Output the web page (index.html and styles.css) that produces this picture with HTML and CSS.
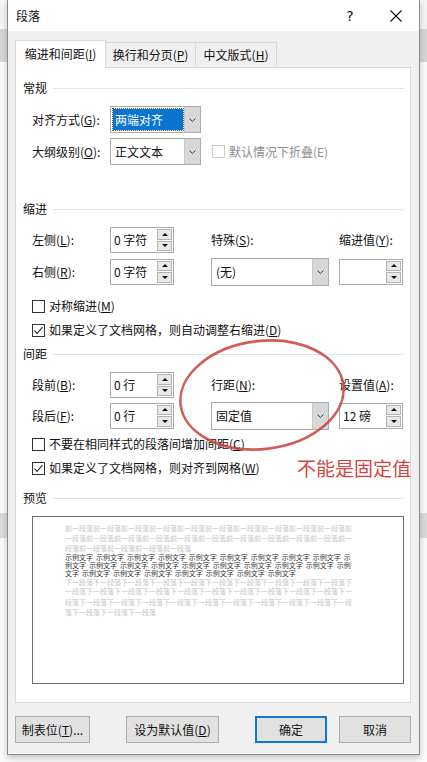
FILE: index.html
```html
<!DOCTYPE html>
<html lang="zh-CN">

<head>
    <meta charset="UTF-8">
    <title>段落</title>
    <link rel="stylesheet" href="styles.css">
</head>

<body>
    <div class="dialog">
        <div class="titlebar">
            <span class="title">段落</span>
            <span class="help">?</span>
            <span class="close">
                <svg width="12" height="12" viewBox="0 0 12 12"><path d="M0.5 0.5 L11.5 11.5 M11.5 0.5 L0.5 11.5" stroke="#111" stroke-width="1.1" fill="none"/></svg>
            </span>
        </div>

        <div class="dialog-body">
            <div class="tabs">
                <div class="tab active">缩进和间距(<u>I</u>)</div>
                <div class="tab tab-2">换行和分页(<u>P</u>)</div>
                <div class="tab tab-3">中文版式(<u>H</u>)</div>
            </div>

            <div class="panel">
                <div class="group-title"><span>常规</span></div>
                <div class="form-grid general">
                    <span>对齐方式(<u>G</u>):</span>
                    <div class="select narrow">
                        <span class="select-val"><span class="hl">两端对齐</span></span>
                        <span class="select-btn"><svg width="7" height="4" viewBox="0 0 7 4"><polyline points="0.5,0.5 3.5,3.5 6.5,0.5" fill="none" stroke="#444" stroke-width="1"/></svg></span>
                    </div>
                    <span></span>
                    <span>大纲级别(<u>O</u>):</span>
                    <div class="select narrow">
                        <span class="select-val">正文文本</span>
                        <span class="select-btn"><svg width="7" height="4" viewBox="0 0 7 4"><polyline points="0.5,0.5 3.5,3.5 6.5,0.5" fill="none" stroke="#444" stroke-width="1"/></svg></span>
                    </div>
                    <div class="cb-inline disabled"><span class="cb"></span><span>默认情况下折叠(E)</span></div>
                </div>

                <div class="group-title gap-indent"><span>缩进</span></div>
                <div class="form-grid measures">
                    <span>左侧(<u>L</u>):</span>
                    <div class="spin"><span>0 字符</span><div class="spin-btns"><span class="up"></span><span class="down"></span></div></div>
                    <span>特殊(<u>S</u>):</span>
                    <span>缩进值(<u>Y</u>):</span>

                    <span>右侧(<u>R</u>):</span>
                    <div class="spin"><span>0 字符</span><div class="spin-btns"><span class="up"></span><span class="down"></span></div></div>
                    <div class="select wide">
                        <span class="select-val">(无)</span>
                        <span class="select-btn"><svg width="7" height="4" viewBox="0 0 7 4"><polyline points="0.5,0.5 3.5,3.5 6.5,0.5" fill="none" stroke="#444" stroke-width="1"/></svg></span>
                    </div>
                    <div class="spin"><span></span><div class="spin-btns"><span class="up"></span><span class="down"></span></div></div>
                </div>

                <div class="cb-row first"><span class="cb"></span><span>对称缩进(<u>M</u>)</span></div>
                <div class="cb-row"><span class="cb checked"><svg width="11" height="11" viewBox="0 0 11 11"><polyline points="1.5,5.5 4,8.5 9.5,2" fill="none" stroke="#111" stroke-width="1.1"/></svg></span><span>如果定义了文档网格，则自动调整右缩进(<u>D</u>)</span></div>

                <div class="group-title gap-small"><span>间距</span></div>
                <div class="form-grid measures spacing">
                    <span>段前(<u>B</u>):</span>
                    <div class="spin"><span>0 行</span><div class="spin-btns"><span class="up"></span><span class="down"></span></div></div>
                    <span>行距(<u>N</u>):</span>
                    <span>设置值(<u>A</u>):</span>

                    <span>段后(<u>F</u>):</span>
                    <div class="spin"><span>0 行</span><div class="spin-btns"><span class="up"></span><span class="down"></span></div></div>
                    <div class="select wide">
                        <span class="select-val">固定值</span>
                        <span class="select-btn"><svg width="7" height="4" viewBox="0 0 7 4"><polyline points="0.5,0.5 3.5,3.5 6.5,0.5" fill="none" stroke="#444" stroke-width="1"/></svg></span>
                    </div>
                    <div class="spin"><span>12 磅</span><div class="spin-btns"><span class="up"></span><span class="down"></span></div></div>
                </div>

                <div class="cb-row after-spacing"><span class="cb"></span><span>不要在相同样式的段落间增加间距(<u>C</u>)</span></div>
                <div class="cb-row"><span class="cb checked"><svg width="11" height="11" viewBox="0 0 11 11"><polyline points="1.5,5.5 4,8.5 9.5,2" fill="none" stroke="#111" stroke-width="1.1"/></svg></span><span>如果定义了文档网格，则对齐到网格(<u>W</u>)</span></div>

                <div class="group-title gap-preview"><span>预览</span></div>
                <div class="preview">
                    <div class="preview-text">
                        <p class="pv-other">前一段落前一段落前一段落前一段落前一段落前一段落前一段落前一段落前一段落前一段落前一段落前一段落前一段落前一段落前一段落前一段落前一段落前一段落前一段落前一段落前一段落前一段落前一段落前一段落前一段落</p>
                        <p class="pv-sample">示例文字 示例文字 示例文字 示例文字 示例文字 示例文字 示例文字 示例文字 示例文字 示例文字 示例文字 示例文字 示例文字 示例文字 示例文字 示例文字 示例文字 示例文字 示例文字 示例文字 示例文字 示例文字 示例文字 示例文字 示例文字 示例文字</p>
                        <p class="pv-other">下一段落下一段落下一段落下一段落下一段落下一段落下一段落下一段落下一段落下一段落下一段落下一段落下一段落下一段落下一段落下一段落下一段落下一段落下一段落下一段落下一段落下一段落下一段落下一段落下一段落下一段落下一段落下一段落下一段落下一段落下一段落下一段落下一段落下一段落</p>
                    </div>
                </div>
            </div>

            <div class="buttons">
                <button class="btn btn-tabs">制表位(<u>T</u>)...</button>
                <button class="btn btn-default">设为默认值(<u>D</u>)</button>
                <button class="btn btn-ok">确定</button>
                <button class="btn btn-cancel">取消</button>
            </div>
        </div>

        <!-- red annotation drawn over the dialog -->
        <svg class="mark" width="411" height="754" viewBox="0 0 411 754">
            <ellipse cx="254" cy="395" rx="82" ry="54" transform="rotate(-7 254 395)" fill="none" stroke="#c8413b" stroke-opacity="0.85" stroke-width="2.6"/>
        </svg>
        <span class="note">不能是固定值</span>
    </div>
</body>

</html>
```

FILE: styles.css
```css
* {
    box-sizing: border-box;
    margin: 0;
    padding: 0;
}

body {
    width: 427px;
    height: 762px;
    overflow: hidden;
    font-family: "Noto Sans CJK SC", "Noto Sans", sans-serif;
    font-size: 12px;
    line-height: 16px;
    color: #111;
    background: linear-gradient(to bottom,
        #f4f4f4 0, #f4f4f4 29px,
        #d6d6d6 29px, #d6d6d6 62px,
        #fafafa 62px, #fafafa 513px,
        #dadada 513px, #dadada 538px,
        #fafafa 538px);
}

u {
    text-decoration: underline;
    text-underline-offset: 1px;
}

.dialog {
    position: relative;
    margin-left: 7px;
    width: 413px;
    height: 755px;
    background: #f0f0f0;
    border: 1px solid #8c8c8c;
    border-top: none;
    box-shadow: 0 3px 6px rgba(0, 0, 0, 0.22);
    display: flex;
    flex-direction: column;
}

.titlebar {
    height: 31px;
    background: #fff;
    display: flex;
    align-items: center;
    padding-left: 8px;
}

.title {
    flex: 1;
}

.help,
.close {
    width: 46px;
    height: 31px;
    display: flex;
    align-items: center;
    justify-content: center;
}

.help {
    font-size: 14px;
    font-family: "DejaVu Sans", sans-serif;
}

.dialog-body {
    flex: 1;
    padding: 0 8px 0 7px;
    display: flex;
    flex-direction: column;
}

.tabs {
    height: 36px;
    display: flex;
    align-items: flex-end;
}

.tab {
    height: 25px;
    line-height: 23px;
    text-align: center;
    border: 1px solid #d9d9d9;
    border-bottom: none;
    background: #f0f0f0;
    margin-left: -1px;
}

.tab.active {
    position: relative;
    z-index: 1;
    height: 28px;
    line-height: 26px;
    width: 91px;
    margin-left: 0;
    margin-bottom: -1px;
    background: #fff;
}

.tab-2 {
    width: 91px;
}

.tab-3 {
    width: 82px;
}

.panel {
    height: 636px;
    background: #fff;
    border: 1px solid #d9d9d9;
    padding: 12px 6px 0 7px;
}

.group-title {
    height: 16px;
    display: flex;
    align-items: center;
}

.group-title::after {
    content: "";
    flex: 1;
    height: 1px;
    margin-left: 6px;
    background: #e2e2e2;
}

.gap-indent {
    margin-top: 36px;
}

.gap-small {
    margin-top: 8px;
}

.gap-preview {
    margin-top: 14px;
}

.form-grid {
    display: grid;
    grid-template-columns: 78px 101px 128px 64px;
    align-items: center;
    padding-left: 9px;
    margin-top: 10px;
}

.general {
    grid-template-columns: 78px 101px auto;
    grid-template-rows: 27px 27px;
    row-gap: 5px;
}

.measures {
    grid-template-rows: 26px 27px;
    row-gap: 5px;
}

.spacing {
    row-gap: 4px;
}

.select {
    height: 27px;
    border: 1px solid #acacac;
    background: #fff;
    display: flex;
}

.select.narrow {
    width: 91px;
}

.select.wide {
    width: 118px;
    height: 28px;
}

.select-val {
    flex: 1;
    display: flex;
    align-items: center;
    padding-left: 4px;
}

.select-val .hl {
    align-self: stretch;
    flex: 1;
    margin: 2px 1px 2px -2px;
    padding-left: 2px;
    display: flex;
    align-items: center;
    background: #0a74d0;
    color: #fff;
    outline: 1px dotted #5c5c5c;
}

.select-btn {
    width: 16px;
    background: #d8d8d8;
    border-left: 1px solid #c9c9c9;
    display: flex;
    align-items: center;
    justify-content: center;
}

.spin {
    width: 64px;
    height: 26px;
    border: 1px solid #acacac;
    background: #fff;
    display: flex;
    align-items: center;
    justify-content: space-between;
    padding-left: 3px;
}

.spin-btns {
    width: 15px;
    height: 22px;
    margin-right: 1px;
    display: flex;
    flex-direction: column;
    gap: 1px;
}

.spin-btns span {
    flex: 1;
    background: #e8e8e8;
    border: 1px solid #b4b4b4;
    display: flex;
    align-items: center;
    justify-content: center;
}

.spin-btns .up::after,
.spin-btns .down::after {
    content: "";
    border-left: 3px solid transparent;
    border-right: 3px solid transparent;
}

.spin-btns .up::after {
    border-bottom: 3px solid #111;
}

.spin-btns .down::after {
    border-top: 3px solid #111;
}

.cb {
    width: 13px;
    height: 13px;
    border: 1px solid #333;
    background: #fff;
    display: flex;
    align-items: center;
    justify-content: center;
    flex-shrink: 0;
}

.cb-inline,
.cb-row {
    display: flex;
    align-items: center;
    gap: 4px;
}

.cb-inline {
    margin-left: 1px;
}

.cb-inline.disabled {
    color: #8d8d8d;
}

.cb-inline.disabled .cb {
    border-color: #cccccc;
}

.cb-row {
    height: 16px;
    padding-left: 9px;
    margin-top: 8px;
}

.cb-row.first {
    margin-top: 13px;
}

.cb-row.after-spacing {
    margin-top: 7px;
}

.preview {
    margin: 10px 0 0 9px;
    width: 372px;
    height: 168px;
    border: 1px solid #6e6e6e;
    padding: 6px 0 0 32px;
    overflow: hidden;
}

/* drawn at 10px and shrunk, so the tiny sample text keeps its size */
.preview-text {
    width: 412px;
    transform: scale(0.7);
    transform-origin: 0 0;
}

.preview p {
    font-size: 10px;
    word-break: break-all;
}

.pv-other {
    line-height: 14.3px;
    color: #c6c6c6;
}

.pv-sample {
    line-height: 11.4px;
    color: #333;
    word-spacing: 2px;
}

.buttons {
    display: flex;
    margin-top: 13px;
}

.btn {
    height: 27px;
    font-family: inherit;
    font-size: 12px;
    color: #111;
    background: #e1e1e1;
    border: 1px solid #adadad;
}

.btn-tabs {
    width: 75px;
}

.btn-default {
    width: 93px;
    margin-left: 36px;
}

.btn-ok {
    width: 72px;
    margin-left: 36px;
    border: 2px solid #0f78d4;
}

.btn-cancel {
    width: 72px;
    margin-left: 12px;
}

.mark {
    position: absolute;
    left: 0;
    top: 0;
    pointer-events: none;
}

.note {
    position: absolute;
    left: 289px;
    top: 457px;
    font-size: 19px;
    line-height: 22px;
    color: #d3463f;
}
```
